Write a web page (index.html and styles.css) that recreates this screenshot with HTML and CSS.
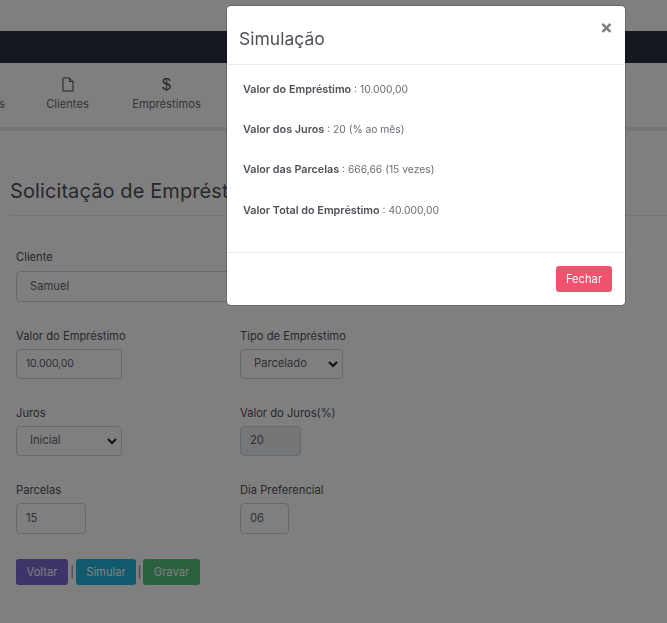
FILE: index.html
```html
<!DOCTYPE html>
<html lang="pt">
<head>
<meta charset="utf-8">
<title>Solicitação de Empréstimo</title>
<link rel="stylesheet" href="styles.css">
</head>
<body>
<div class="page">
  <div class="topgap"></div>
  <header class="topbar"></header>
  <nav class="menu">
    <a class="item item-first"><span>s</span></a>
    <a class="item item-clients">
      <svg class="ico" width="12" height="14" viewBox="0 0 12 14"><path d="M1 .5h6.500L11 4v9.500H1zM7.500 .5V4H11" fill="none" stroke="#4a4a4f" stroke-width="1"/></svg>
      <span>Clientes</span>
    </a>
    <a class="item item-loans"><span class="ico dollar">$</span><span>Empréstimos</span></a>
  </nav>
  <main class="content">
    <h2 class="title">Solicitação de Empréstimo</h2>
    <form class="form">
      <div class="field field-wide">
        <label>Cliente</label>
        <div class="control wide">Samuel</div>
      </div>
      <div class="grid">
        <div class="field"><label>Valor do Empréstimo</label><div class="control w106 num">10.000,00</div></div>
        <div class="field"><label>Tipo de Empréstimo</label><div class="control w103 select"><span>Parcelado</span><svg width="10" height="7" viewBox="0 0 10 7"><path d="M1 1l4 4 4-4" fill="none" stroke="#222" stroke-width="2"/></svg></div></div>
        <div class="field"><label>Juros</label><div class="control w106 select"><span>Inicial</span><svg width="10" height="7" viewBox="0 0 10 7"><path d="M1 1l4 4 4-4" fill="none" stroke="#222" stroke-width="2"/></svg></div></div>
        <div class="field"><label>Valor do Juros(%)</label><div class="control w61 disabled">20</div></div>
        <div class="field"><label>Parcelas</label><div class="control w70">15</div></div>
        <div class="field"><label>Dia Preferencial</label><div class="control w49">06</div></div>
      </div>
      <div class="actions">
        <span class="btn violet">Voltar</span><span class="sep">|</span><span class="btn cyan">Simular</span><span class="sep sep-narrow">|</span><span class="btn green">Gravar</span>
      </div>
    </form>
  </main>
</div>
<div class="backdrop"></div>
<div class="modal">
  <div class="modal-head">
    <h5>Simulação</h5>
    <span class="close">×</span>
  </div>
  <div class="modal-body">
    <p><b>Valor do Empréstimo</b> : 10.000,00</p>
    <p><b>Valor dos Juros</b> : 20 (% ao mês)</p>
    <p><b>Valor das Parcelas</b> : 666,66 (15 vezes)</p>
    <p><b>Valor Total do Empréstimo</b> : 40.000,00</p>
  </div>
  <div class="modal-foot"><span class="btn pink">Fechar</span></div>
</div>
</body>
</html>
```
FILE: styles.css
```css
* { box-sizing: border-box; }
html, body { margin: 0; height: 100%; overflow: hidden; }
body { font-family: Inter, "Open Sans", sans-serif; font-size: 11.200px; color: #4f5058; background: #fff; }
.page { width: 667px; height: 623px; overflow: hidden; }
.topgap { height: 31px; }
.topbar { height: 32px; background: #2a3042; }
.menu { height: 68px; display: flex; border-bottom: 4px solid #e9ebef; }
.item { display: flex; flex-direction: column; align-items: center; padding-top: 14px; color: #6a6c75; white-space: nowrap; }
.ico { display: block; height: 15px; margin-bottom: 5px; }
.item-first { width: 4px; padding-top: 34px; }
.item-clients { width: 43px; margin-left: 42px; }
.item-loans { width: 69px; margin-left: 43px; }
.dollar { font-family: "Liberation Sans", sans-serif; font-size: 16px; line-height: 15px; color: #4a4a4f; }
.content { padding: 0 0 0 10px; }
.title { font-size: 20px; font-weight: 400; margin: 0; height: 85px; padding-top: 45px; line-height: 30px; border-bottom: 1px solid #e9ebef; white-space: nowrap; color: #4f5058; letter-spacing: .1px; }
.form { padding: 0 6px; }
.field label { display: block; line-height: 17px; padding-top: 2px; margin-bottom: 4px; color: #4f5058; white-space: nowrap; }
.field-wide { margin-top: 32px; height: 78px; }
.field-wide label { padding-top: 1px; margin-bottom: 5px; }
.control { height: 30px; border: 1px solid #ced4da; border-radius: 4px; padding: 0 9px 2px; display: flex; align-items: center; color: #5f636b; background: #fff; }
.wide { width: 400px; height: 31px; padding-left: 13px; }
.num { font-size: 10.500px; letter-spacing: -.15px; }
.grid { display: grid; grid-template-columns: 224px 1fr; grid-auto-rows: 77px; }
.w106 { width: 106px; }
.w103 { width: 103px; }
.w61 { width: 61px; }
.w70 { width: 70px; height: 31px; }
.w49 { width: 49px; height: 31px; }
.select { justify-content: space-between; padding: 0 4px 2px 13px; }
.select svg { margin-bottom: -2px; }
.disabled { background: #e9ecef; }
.actions { display: flex; align-items: center; margin-top: 2px; }
.btn { display: inline-flex; align-items: center; justify-content: center; height: 26px; border-radius: 3px; color: #fff; }
.violet { width: 52px; background: #7a68d0; }
.cyan { width: 60px; background: #22b4dc; }
.green { width: 57px; background: #55c07a; }
.sep { width: 8px; text-align: center; color: #6a6c75; }
.sep-narrow { width: 7px; }
.backdrop { position: fixed; inset: 0; background: rgba(0,0,0,.5); }
.modal { position: fixed; left: 227px; top: 6px; width: 398px; height: 299px; background: #fff; border-radius: 4px; display: flex; flex-direction: column; box-shadow: 0 0 0 .5px rgba(0,0,0,.35); }
.modal-head { height: 59px; border-bottom: 1px solid #e9ecef; padding: 0 12px; position: relative; flex: none; }
.modal-head h5 { margin: 0; font-size: 17.500px; font-weight: 400; line-height: 24px; padding-top: 21px; color: #4f5058; }
.close { position: absolute; right: 12px; top: 10px; font-size: 19px; line-height: 24px; font-weight: 700; color: #808080; }
.modal-body { flex: 1; padding: 15.500px 16px 0; font-size: 10.300px; }
.modal-body p { height: 16px; margin: 0 0 24.400px; line-height: 16px; color: #6a6c75; white-space: nowrap; }
.modal-body b { font-size: 10.800px; font-weight: 600; color: #4f5058; }
.modal-foot { height: 53px; border-top: 1px solid #e9ecef; display: flex; justify-content: flex-end; align-items: center; padding-right: 13px; flex: none; }
.pink { width: 56px; background: #f1536e; }
```
